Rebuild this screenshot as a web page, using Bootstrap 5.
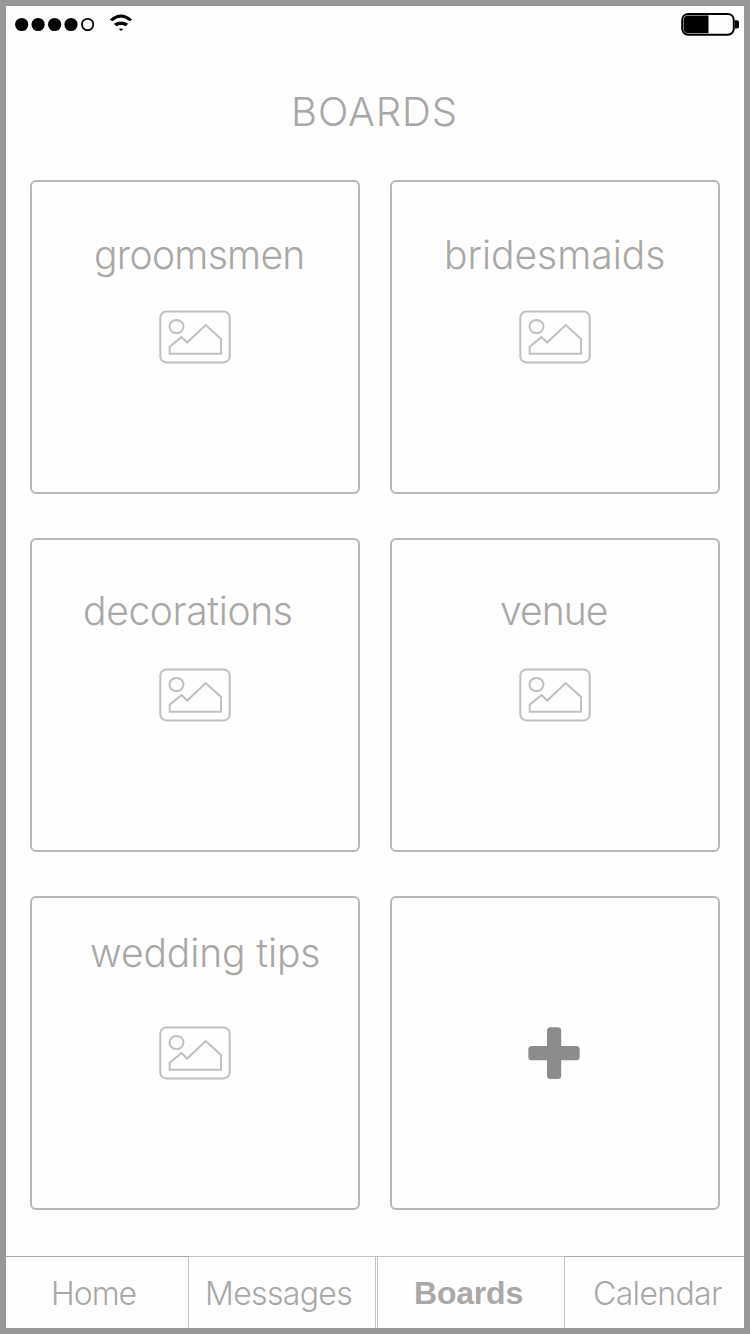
<!DOCTYPE html>
<html lang="en">
<head>
<meta charset="utf-8">
<meta name="viewport" content="width=device-width, initial-scale=1">
<title>Boards</title>
<link href="https://cdn.jsdelivr.net/npm/bootstrap@5.3.0/dist/css/bootstrap.min.css" rel="stylesheet">
<style>
body{font-family:Inter,"Liberation Sans",sans-serif;font-weight:300;color:#a9a8a7;background:#fefefe}
.screen{width:750px;height:1334px;border:6px solid #979797;background:#fefefe}
.statusbar{height:36px;padding:0 4px 0 8px}
.screen-title{font-size:40px;line-height:48px;font-weight:300;margin:46px 0 0;padding-left:285px;height:92px;letter-spacing:.9px;white-space:nowrap}
.boards{grid-template-columns:330px 330px;grid-auto-rows:314px;gap:44px 30px;margin-left:24px}
.board{border:2px solid #b4b7bb;border-radius:6px;color:inherit;text-decoration:none}
.board-name{font-size:39px;line-height:48px;height:128px;padding-top:49px;white-space:nowrap}
.n1{padding-left:62px;letter-spacing:-.7px}
.n2{padding-left:52px}
.n3{padding-left:51px;padding-top:47px;letter-spacing:-.35px}
.n4{padding-left:108px;padding-top:47px;letter-spacing:-.9px}
.n5{padding-left:58px;padding-top:31px;letter-spacing:-.1px}
.plus-icon{margin-right:2px}
.tabs{font-size:32px;line-height:72px;height:72px;margin-top:46px}
.tab{border-top:1px solid #c4c4c4;border-right:1px solid #c4c4c4;color:inherit;text-decoration:none;white-space:nowrap;padding-top:1px}
.t1{width:183px;padding-left:45px;border-top-color:#a9a9a9;letter-spacing:-1px}
.t2{width:187px;padding-left:16px;letter-spacing:-.65px}
.tab-gap{width:1px;border-top:1px solid #c4c4c4}
.t3{width:188px;padding:0 0 0 36px;border-left:1px solid #c4c4c4;font-family:"Liberation Sans",sans-serif;font-weight:700;letter-spacing:-.2px}
.t4{width:179px;padding-left:28px;border-top-color:#a9a9a9;border-right:0;letter-spacing:-.65px}
</style>
</head>
<body>
<svg class="d-none" xmlns="http://www.w3.org/2000/svg">
<symbol id="picture" viewBox="0 0 72 54"><g fill="none" stroke="#bfc0c1" stroke-width="2"><rect x="1.3" y="1.6" width="69.4" height="50.8" rx="6"/><ellipse cx="17.5" cy="16.5" rx="7" ry="6.6"/><path d="M10.7 43.7v-7L22.5 27l5.7 5.5L46.7 15 62 29v14.7z"/></g></symbol>
</svg>
<main class="screen d-flex flex-column overflow-hidden">
<header class="statusbar d-flex justify-content-between align-items-center">
<svg width="122" height="36" viewBox="14 6 122 36"><circle cx="21.7" cy="24.5" r="6.6"/><circle cx="38.1" cy="24.5" r="6.6"/><circle cx="54.6" cy="24.5" r="6.6"/><circle cx="71" cy="24.5" r="6.6"/><circle cx="87.6" cy="24.5" r="5.7" fill="none" stroke="#000" stroke-width="1.7"/>
<path d="M109.8 19.5Q121 9.5 132 19.5L129.7 21.2Q121 14 112.2 21.2zM113.8 23.7Q121 19.5 128.2 23.7L125.7 26.3Q121 23.6 116.3 26.3zM118.8 29Q121 27.8 123.2 29L121 31z"/></svg>
<svg width="60" height="36" viewBox="680 6 60 36"><rect x="682.2" y="13.9" width="51.6" height="20.8" rx="6" fill="none" stroke="#000" stroke-width="2"/><path d="M687 15.6H708.5V33.2H687Q683.6 32 683.6 29V20Q683.6 17 687 15.6zM735 20.3H737Q739 20.3 739 22V26.8Q739 28.5 737 28.5H735z"/></svg>
</header>
<h1 class="screen-title">BOARDS</h1>
<section class="boards d-grid">
<a class="board d-flex flex-column"><div class="board-name n1">groomsmen</div><svg class="mx-auto" width="72" height="54"><use href="#picture"/></svg></a>
<a class="board d-flex flex-column"><div class="board-name n2">bridesmaids</div><svg class="mx-auto" width="72" height="54"><use href="#picture"/></svg></a>
<a class="board d-flex flex-column"><div class="board-name n3">decorations</div><svg class="mx-auto" width="72" height="54"><use href="#picture"/></svg></a>
<a class="board d-flex flex-column"><div class="board-name n4">venue</div><svg class="mx-auto" width="72" height="54"><use href="#picture"/></svg></a>
<a class="board d-flex flex-column"><div class="board-name n5">wedding tips</div><svg class="mx-auto" width="72" height="54"><use href="#picture"/></svg></a>
<a class="board d-flex align-items-center justify-content-center" aria-label="Add board"><svg class="plus-icon" width="54" height="54" viewBox="527 1026 54 54" fill="#8c8c8c"><rect x="528.3" y="1046" width="51.4" height="14.3" rx="3.5"/><rect x="547" y="1027.3" width="14.2" height="51.7" rx="3.5"/></svg></a>
</section>
<nav class="tabs d-flex">
<a class="tab t1">Home</a><a class="tab t2">Messages</a><span class="tab-gap"></span><a class="tab t3">Boards</a><a class="tab t4">Calendar</a>
</nav>
</main>
<script src="https://cdn.jsdelivr.net/npm/bootstrap@5.3.0/dist/js/bootstrap.bundle.min.js"></script>
</body>
</html>
